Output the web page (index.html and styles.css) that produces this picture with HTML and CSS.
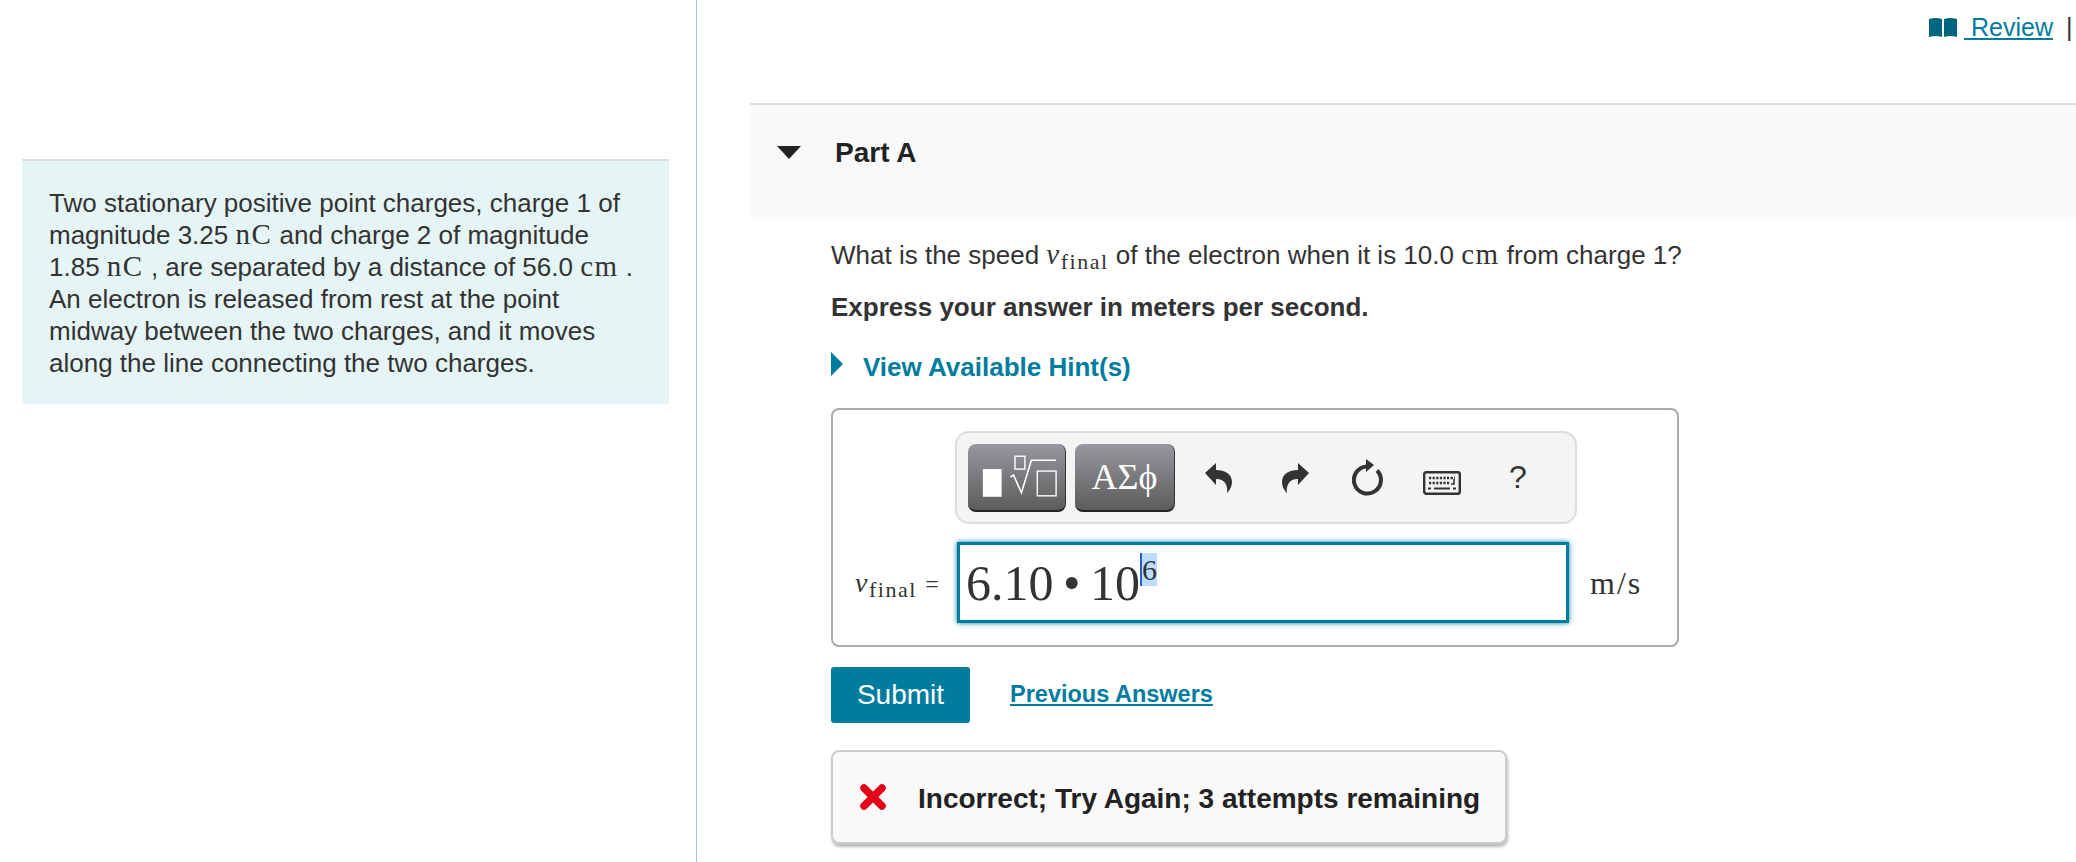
FILE: index.html
```html
<!DOCTYPE html>
<html lang="en">
<head>
    <meta charset="UTF-8">
    <meta name="viewport" content="width=device-width, initial-scale=1.0">
    <title>Part A</title>
    <link rel="stylesheet" href="styles.css">
</head>
<body>
    <div class="page">
        <div class="left-pane">
            <div class="intro">
                Two stationary positive point charges, charge 1 of<br>
                magnitude 3.25 <span class="math">nC</span> and charge 2 of magnitude<br>
                1.85 <span class="math">nC</span> , are separated by a distance of 56.0 <span class="math">cm</span> .<br>
                An electron is released from rest at the point<br>
                midway between the two charges, and it moves<br>
                along the line connecting the two charges.
            </div>
        </div>

        <div class="right-pane">
            <div class="top-links">
                <svg class="book" width="28" height="20" viewBox="0 0 28 20">
                    <path d="M0 1 Q7 -1 13 1 V19 Q7 17 0 19 Z M15 1 Q21 -1 28 1 V19 Q21 17 15 19 Z" fill="#006680"/>
                </svg>
                <a class="review-link" href="#">&nbsp;Review</a>
                <span class="pipe">|</span>
            </div>

            <div class="part-header">
                <span class="part-arrow"></span>
                <span class="part-title">Part A</span>
            </div>

            <div class="part-body">
                <p class="question">What is the speed <span class="math"><i>v</i><sub>final</sub></span> of the electron when it is 10.0 <span class="math">cm</span> from charge 1?</p>
                <p class="instruction">Express your answer in meters per second.</p>
                <div class="hint">
                    <span class="hint-arrow"></span>
                    <a href="#">View Available Hint(s)</a>
                </div>

                <div class="answer-box">
                    <div class="toolbar">
                        <button class="tool-btn tool-templates">
                            <svg width="98" height="68" viewBox="0 0 98 68">
                                <rect x="15" y="26" width="19" height="28" fill="#fff"/>
                                <rect x="47.5" y="13" width="10" height="13" fill="none" stroke="#fff" stroke-width="1.4"/>
                                <path d="M43 34 L46 32 L54 50 L64 17 H89" fill="none" stroke="#fff" stroke-width="1.6"/>
                                <rect x="70" y="28" width="19" height="25" fill="none" stroke="#fff" stroke-width="1.4"/>
                            </svg>
                        </button>
                        <button class="tool-btn tool-symbols">ΑΣϕ</button>
                        <svg class="tool-icon icon-undo" width="28" height="30" viewBox="0 0 28 30">
                            <path d="M0 10 L11 0 V7 C20 7 27 11 27 19 C27 24 24 28 22 30 C23 24 21 16 11 16 V22 Z" fill="#333"/>
                        </svg>
                        <svg class="tool-icon icon-redo" width="28" height="30" viewBox="0 0 28 30">
                            <path d="M28 10 L17 0 V7 C8 7 1 11 1 19 C1 24 4 28 6 30 C5 24 7 16 17 16 V22 Z" fill="#333"/>
                        </svg>
                        <svg class="tool-icon icon-reset" width="32" height="38" viewBox="0 0 32 38">
                            <path d="M15 7.5 A13.5 13.5 0 1 0 25 11.5" fill="none" stroke="#333" stroke-width="4"/>
                            <path d="M14 0 L22 6 L14 13 Z" fill="#333"/>
                        </svg>
                        <svg class="tool-icon icon-keyboard" width="38" height="24" viewBox="0 0 38 24">
                            <rect x="1.2" y="1.2" width="35.6" height="21.6" rx="2" fill="#f4f4f4" stroke="#333" stroke-width="2.4"/>
                            <path d="M6 7 H32 M6 12 H27" stroke="#333" stroke-width="2.4" stroke-dasharray="2.2 1.4"/>
                            <path d="M31 8 V13 H28" fill="none" stroke="#333" stroke-width="1.6"/>
                            <path d="M5 17.5 H8 M11 17.5 H27 M30 17.5 H33" stroke="#333" stroke-width="2"/>
                        </svg>
                        <span class="tool-help">?</span>
                    </div>

                    <div class="answer-row">
                        <span class="answer-label math"><i>v</i><sub>final</sub> <span class="equals">=</span></span>
                        <div class="answer-input">6.10 • 10<sup class="selected-exp">6</sup></div>
                        <span class="answer-unit math">m/s</span>
                    </div>
                </div>

                <div class="actions">
                    <button class="submit-btn">Submit</button>
                    <a class="previous" href="#">Previous Answers</a>
                </div>

                <div class="feedback">
                    <svg width="26" height="26" viewBox="0 0 26 26">
                        <path d="M4 4 L22 22 M22 4 L4 22" stroke="#e2001a" stroke-width="7.5" stroke-linecap="round"/>
                    </svg>
                    <span class="feedback-text">Incorrect; Try Again; 3 attempts remaining</span>
                </div>
            </div>
        </div>
    </div>
</body>
</html>
```

FILE: styles.css
```css
/* Global Styling */
body {
    margin: 0;
    padding: 0;
    font-family: "Liberation Sans", Arial, sans-serif;
    font-size: 26px;
    color: #333;
    background-color: #fff;
}

a {
    color: #007c9f;
}

.math {
    font-family: "Liberation Serif", serif;
    font-size: 29px;
    line-height: 1;
    letter-spacing: 1.5px;
}

.math sub {
    font-size: 22px;
    line-height: 0;
    vertical-align: -5px;
}

.page {
    display: flex;
    height: 862px;
    overflow: hidden;
}

/* Left column */
.left-pane {
    width: 697px;
    flex-shrink: 0;
    box-sizing: border-box;
    padding: 159px 27px 0 22px;
    border-right: 1px solid #a9c5e0;
}

.intro {
    box-sizing: border-box;
    height: 245px;
    padding: 26px 0 0 27px;
    background-color: #e5f5f5;
    border-top: 2px solid #ddd;
    line-height: 32px;
}

/* Right column */
.right-pane {
    flex: 1;
    min-width: 0;
    padding-left: 53px;
}

.top-links {
    display: flex;
    align-items: center;
    justify-content: flex-end;
    height: 103px;
    box-sizing: border-box;
    padding: 0 0 48px 0;
    font-size: 25px;
}

.review-link {
    margin-left: 7px;
}

.pipe {
    margin-left: 13px;
    width: 10px;
}

.part-header {
    display: flex;
    align-items: flex-start;
    height: 114px;
    box-sizing: border-box;
    padding: 30px 0 0 27px;
    background-color: #f9f9f9;
    border-top: 2px solid #ddd;
}

.part-arrow {
    width: 0;
    height: 0;
    margin-top: 11px;
    border-left: 12px solid transparent;
    border-right: 12px solid transparent;
    border-top: 13px solid #222;
}

.part-title {
    margin-left: 34px;
    font-size: 28px;
    font-weight: bold;
    line-height: 36px;
    color: #222;
}

.part-body {
    padding-left: 81px;
}

.question {
    margin: 20px 0 0 0;
    line-height: 36px;
}

.instruction {
    margin: 16px 0 0 0;
    font-weight: bold;
    line-height: 36px;
}

.hint {
    display: flex;
    align-items: center;
    margin-top: 24px;
    line-height: 36px;
}

.hint a {
    margin-left: 20px;
    font-weight: bold;
    text-decoration: none;
}

.hint-arrow {
    width: 0;
    height: 0;
    margin-bottom: 6px;
    border-top: 12px solid transparent;
    border-bottom: 12px solid transparent;
    border-left: 12px solid #007c9f;
}

/* Answer box */
.answer-box {
    box-sizing: border-box;
    width: 848px;
    height: 239px;
    margin-top: 23px;
    padding: 21px 0 0 0;
    border: 2px solid #aaa;
    border-radius: 8px;
}

.toolbar {
    display: flex;
    align-items: center;
    box-sizing: border-box;
    width: 622px;
    height: 93px;
    margin-left: 122px;
    padding-left: 11px;
    background-color: #f4f4f4;
    border: 2px solid #ddd;
    border-radius: 14px;
}

.tool-btn {
    display: flex;
    align-items: center;
    justify-content: center;
    height: 68px;
    padding: 0;
    color: #fff;
    background: linear-gradient(#98979f, #5c5c5c);
    border: none;
    border-bottom: 2px solid #222;
    border-right: 1px solid #333;
    border-radius: 8px;
}

.tool-templates {
    width: 98px;
    margin-right: 9px;
}

.tool-symbols {
    width: 100px;
    font-family: "Liberation Serif", serif;
    font-size: 36px;
}

.tool-icon {
    flex-shrink: 0;
}

.icon-undo {
    margin-left: 30px;
}

.icon-redo {
    margin-left: 48px;
}

.icon-reset {
    margin-left: 43px;
}

.icon-keyboard {
    margin-left: 39px;
    margin-top: 10px;
}

.tool-help {
    margin-left: 48px;
    font-size: 32px;
}

.answer-row {
    display: flex;
    align-items: center;
    margin-top: 18px;
}

.answer-label {
    box-sizing: border-box;
    width: 124px;
    padding: 0 0 0 22px;
    font-size: 28px;
    white-space: nowrap;
}

.equals {
    font-size: 24px;
}

.answer-input {
    box-sizing: border-box;
    width: 612px;
    height: 81px;
    padding: 3px 0 0 6px;
    font-family: "Liberation Serif", serif;
    font-size: 50px;
    word-spacing: -3px;
    line-height: 70px;
    white-space: nowrap;
    border: 3px solid #007c9f;
    box-shadow: 0 0 5px #007c9f;
}

.selected-exp {
    position: relative;
    top: -2px;
    font-size: 30px;
    line-height: 0;
    background-color: #bbddff;
    border-left: 2px solid #2a5fd0;
}

.answer-unit {
    margin-left: 21px;
    font-size: 32px;
    letter-spacing: 2px;
}

/* Submit row */
.actions {
    display: flex;
    align-items: center;
    margin-top: 20px;
}

.submit-btn {
    width: 139px;
    height: 56px;
    padding: 0;
    color: #fff;
    font-family: inherit;
    font-size: 28px;
    background-color: #007c9f;
    border: none;
    border-radius: 3px;
}

.previous {
    margin-left: 40px;
    margin-bottom: 2px;
    font-size: 23.5px;
    font-weight: bold;
}

.feedback {
    display: flex;
    align-items: center;
    gap: 32px;
    box-sizing: border-box;
    width: 676px;
    height: 94px;
    margin-top: 27px;
    padding-left: 27px;
    color: #222;
    background-color: #f9f9f9;
    border: 2px solid #ccc;
    border-radius: 8px;
    box-shadow: 1px 3px 3px #bbb;
}

.feedback-text {
    padding-top: 4px;
    font-size: 28px;
    font-weight: bold;
}
```
